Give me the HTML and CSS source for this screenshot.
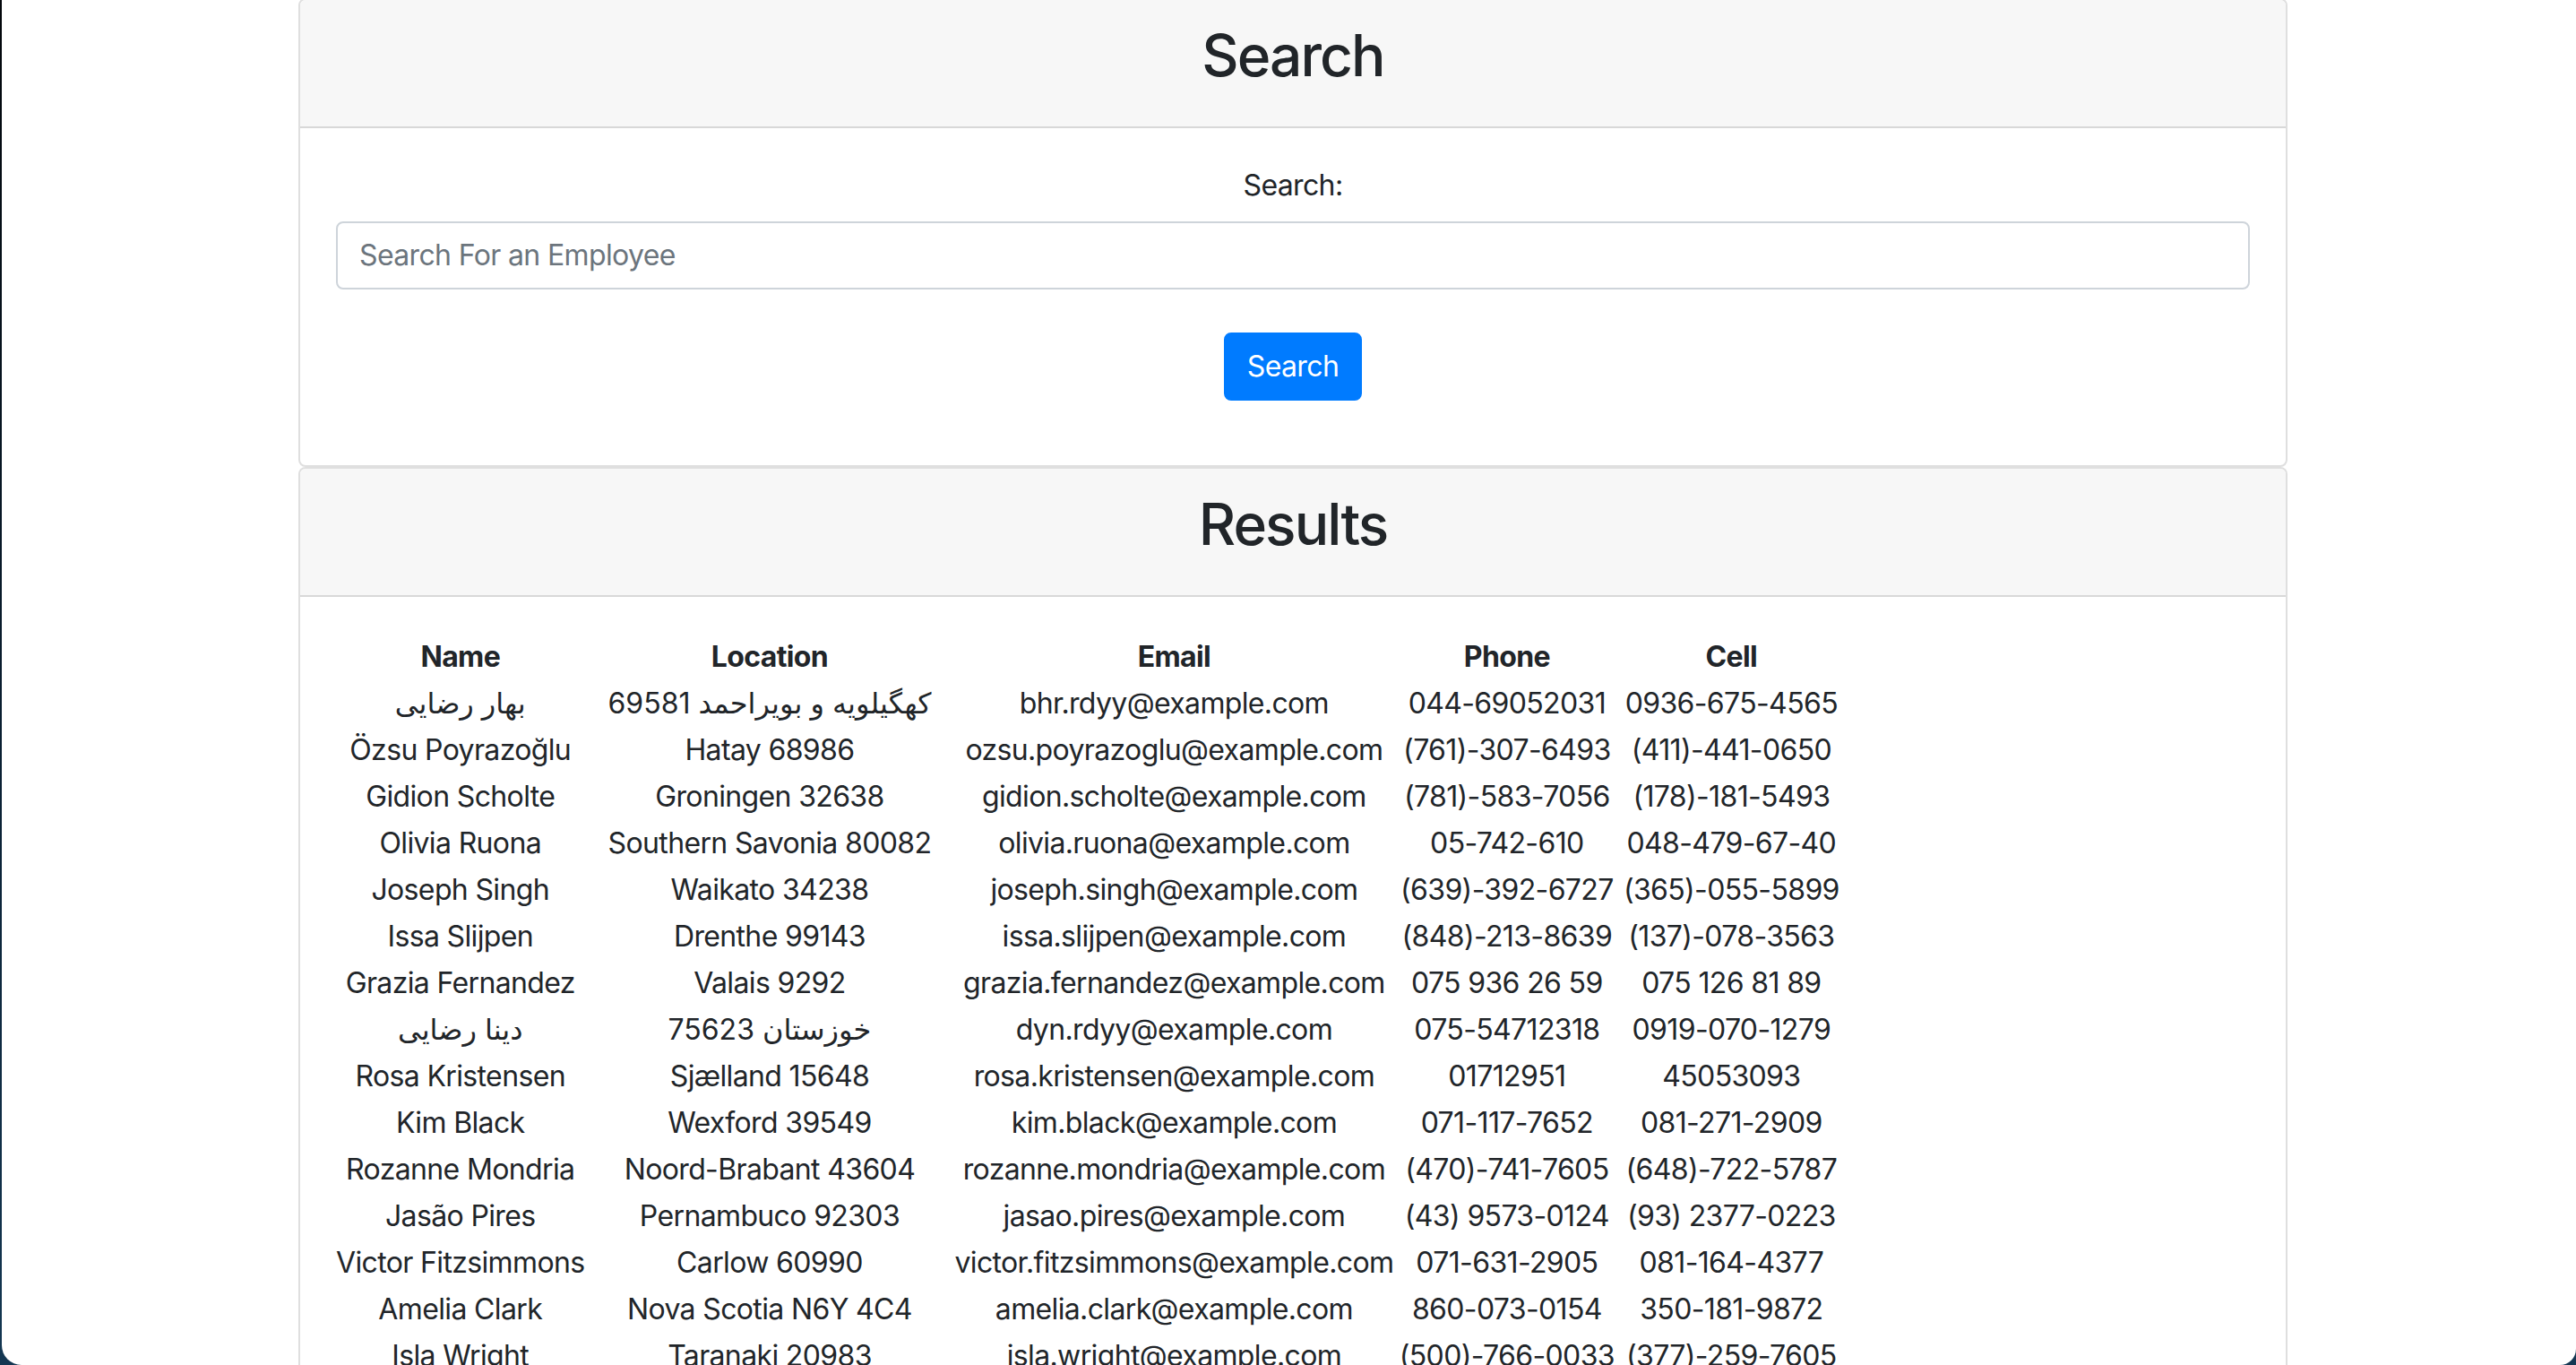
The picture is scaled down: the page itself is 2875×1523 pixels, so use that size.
FILE: index.html
```html
<!DOCTYPE html>
<html lang="en">
<head>
<meta charset="utf-8">
<title>Employee Directory</title>
<link rel="stylesheet" href="styles.css">
</head>
<body>
<div class="window">
  <div class="container">
    <section class="card">
      <div class="card-header"><h2 class="title">Search</h2></div>
      <div class="card-body">
        <form class="search-form">
          <div class="form-group">
            <label class="label" for="q">Search:</label>
            <input class="input" id="q" type="text" placeholder="Search For an Employee">
          </div>
          <button class="btn" type="button">Search</button>
        </form>
      </div>
    </section>
    <section class="card">
      <div class="card-header"><h2 class="title">Results</h2></div>
      <div class="card-body results-body">
        <table class="results">
          <thead>
            <tr><th class="col-name">Name</th><th class="col-loc">Location</th><th class="col-email">Email</th><th class="col-phone">Phone</th><th class="col-cell">Cell</th></tr>
          </thead>
          <tbody>
            <tr><td>بهار رضایی</td><td>کهگیلویه و بویراحمد 69581</td><td>bhr.rdyy@example.com</td><td>044-69052031</td><td>0936-675-4565</td></tr>
            <tr><td>Özsu Poyrazoğlu</td><td>Hatay 68986</td><td>ozsu.poyrazoglu@example.com</td><td>(761)-307-6493</td><td>(411)-441-0650</td></tr>
            <tr><td>Gidion Scholte</td><td>Groningen 32638</td><td>gidion.scholte@example.com</td><td>(781)-583-7056</td><td>(178)-181-5493</td></tr>
            <tr><td>Olivia Ruona</td><td>Southern Savonia 80082</td><td>olivia.ruona@example.com</td><td>05-742-610</td><td>048-479-67-40</td></tr>
            <tr><td>Joseph Singh</td><td>Waikato 34238</td><td>joseph.singh@example.com</td><td>(639)-392-6727</td><td>(365)-055-5899</td></tr>
            <tr><td>Issa Slijpen</td><td>Drenthe 99143</td><td>issa.slijpen@example.com</td><td>(848)-213-8639</td><td>(137)-078-3563</td></tr>
            <tr><td>Grazia Fernandez</td><td>Valais 9292</td><td>grazia.fernandez@example.com</td><td>075 936 26 59</td><td>075 126 81 89</td></tr>
            <tr><td>دینا رضایی</td><td>خوزستان 75623</td><td>dyn.rdyy@example.com</td><td>075-54712318</td><td>0919-070-1279</td></tr>
            <tr><td>Rosa Kristensen</td><td>Sjælland 15648</td><td>rosa.kristensen@example.com</td><td>01712951</td><td>45053093</td></tr>
            <tr><td>Kim Black</td><td>Wexford 39549</td><td>kim.black@example.com</td><td>071-117-7652</td><td>081-271-2909</td></tr>
            <tr><td>Rozanne Mondria</td><td>Noord-Brabant 43604</td><td>rozanne.mondria@example.com</td><td>(470)-741-7605</td><td>(648)-722-5787</td></tr>
            <tr><td>Jasão Pires</td><td>Pernambuco 92303</td><td>jasao.pires@example.com</td><td>(43) 9573-0124</td><td>(93) 2377-0223</td></tr>
            <tr><td>Victor Fitzsimmons</td><td>Carlow 60990</td><td>victor.fitzsimmons@example.com</td><td>071-631-2905</td><td>081-164-4377</td></tr>
            <tr><td>Amelia Clark</td><td>Nova Scotia N6Y 4C4</td><td>amelia.clark@example.com</td><td>860-073-0154</td><td>350-181-9872</td></tr>
            <tr><td>Isla Wright</td><td>Taranaki 20983</td><td>isla.wright@example.com</td><td>(500)-766-0033</td><td>(377)-259-7605</td></tr>
          </tbody>
        </table>
      </div>
    </section>
  </div>
</div>
</body>
</html>
```

FILE: styles.css
```css
* { box-sizing: border-box; }

html, body {
  margin: 0;
  padding: 0;
  height: 100%;
  overflow: hidden;
}

body {
  background: linear-gradient(to bottom, #03070b 0%, #0b2236 60%, #143752 100%);
  font-family: "Inter", "Noto Sans", "DejaVu Sans", sans-serif;
  font-size: 32px;
  line-height: 1.5;
  color: #212529;
  letter-spacing: -0.02em;
}

.window {
  margin-left: 2px;
  height: 1523px;
  background: #ffffff;
  border-radius: 0 0 18px 22px;
  overflow: hidden;
}

.container {
  width: 2220px;
  margin-left: 331px;
  margin-top: -2px;
}

.card {
  border: 2px solid rgba(0, 0, 0, 0.125);
  border-radius: 8px;
  background: #fff;
  overflow: hidden;
}

.card-header {
  background: #f7f7f7;
  border-bottom: 2px solid rgba(0, 0, 0, 0.125);
  padding: 24px 40px;
  text-align: center;
}

.title {
  margin: 0 0 16px;
  font-size: 64px;
  font-weight: 500;
  line-height: 1.2;
  letter-spacing: -0.03em;
}

.card-body {
  padding: 40px;
  text-align: center;
}

.search-form {
  margin: 0;
}

.form-group {
  margin-bottom: 32px;
}

.label {
  display: inline-block;
  margin-bottom: 16px;
}

.input {
  display: block;
  width: 100%;
  height: 76px;
  padding: 12px 24px;
  font: inherit;
  letter-spacing: -0.02em;
  color: #495057;
  background: #fff;
  border: 2px solid #ced4da;
  border-radius: 8px;
  outline: none;
}

.input::placeholder {
  color: #6c757d;
  opacity: 1;
}

.btn {
  display: inline-block;
  margin: 16px 0 32px;
  height: 76px;
  padding: 12px 24px;
  font: inherit;
  letter-spacing: -0.02em;
  color: #fff;
  background: #007bff;
  border: 2px solid #007bff;
  border-radius: 8px;
}

.results-body {
  text-align: left;
  padding-left: 36px;
}

.results {
  border-collapse: separate;
  border-spacing: 2px;
}

.results th,
.results td {
  padding: 1px 2px;
  text-align: center;
  white-space: nowrap;
  line-height: 48px;
}

.results th {
  font-weight: 700;
}

.results .col-loc {
  width: 405px;
}

.results .col-phone {
  width: 245px;
}

.results .col-cell {
  width: 252px;
}
```
